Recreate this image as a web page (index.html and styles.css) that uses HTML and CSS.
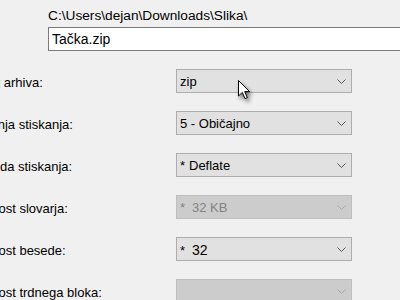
FILE: index.html
```html
<!DOCTYPE html>
<html lang="sl">
<head>
  <meta charset="UTF-8">
  <title>Dodaj v arhiv</title>
  <link rel="stylesheet" href="styles.css">
</head>
<body>
  <div class="dialog">
    <div class="archive">
      <div class="path">C:\Users\dejan\Downloads\Slika\</div>
      <div class="name-box">Tačka.zip</div>
    </div>

    <div class="options">
      <div class="label">Format arhiva:</div>
      <div class="combo">
        <span class="value">zip</span>
        <svg class="arrow" width="9" height="5" viewBox="0 0 9 5"><path d="M0.5 0.5 L4.5 4.5 L8.5 0.5" fill="none" stroke="currentColor"/></svg>
      </div>

      <div class="label">Stopnja stiskanja:</div>
      <div class="combo">
        <span class="value">5 - Običajno</span>
        <svg class="arrow" width="9" height="5" viewBox="0 0 9 5"><path d="M0.5 0.5 L4.5 4.5 L8.5 0.5" fill="none" stroke="currentColor"/></svg>
      </div>

      <div class="label">Metoda stiskanja:</div>
      <div class="combo">
        <span class="value"><span class="star">*</span>Deflate</span>
        <svg class="arrow" width="9" height="5" viewBox="0 0 9 5"><path d="M0.5 0.5 L4.5 4.5 L8.5 0.5" fill="none" stroke="currentColor"/></svg>
      </div>

      <div class="label">Velikost slovarja:</div>
      <div class="combo disabled">
        <span class="value"><span class="star wide">*</span>32 KB</span>
        <svg class="arrow" width="9" height="5" viewBox="0 0 9 5"><path d="M0.5 0.5 L4.5 4.5 L8.5 0.5" fill="none" stroke="currentColor"/></svg>
      </div>

      <div class="label">Velikost besede:</div>
      <div class="combo">
        <span class="value"><span class="star wide">*</span><span class="num">32</span></span>
        <svg class="arrow" width="9" height="5" viewBox="0 0 9 5"><path d="M0.5 0.5 L4.5 4.5 L8.5 0.5" fill="none" stroke="currentColor"/></svg>
      </div>

      <div class="label">Velikost trdnega bloka:</div>
      <div class="combo disabled">
        <span class="value"></span>
        <svg class="arrow" width="9" height="5" viewBox="0 0 9 5"><path d="M0.5 0.5 L4.5 4.5 L8.5 0.5" fill="none" stroke="currentColor"/></svg>
      </div>
    </div>
  </div>

  <!-- kazalec miške -->
  <svg class="cursor" width="13" height="20" viewBox="0 0 13 20">
    <path d="M0.5 0.5 L0.5 16 L4.3 12.4 L7 18.6 L9.3 17.6 L6.7 11.6 L11.6 11.6 Z" fill="#fff" stroke="#000" stroke-width="1"/>
  </svg>
</body>
</html>
```

FILE: styles.css
```css
  body {
    margin: 0;
    background: #f0f0f0;
    font-family: 'Liberation Sans', Arial, sans-serif;
    font-size: 13px;
    color: #000;
    overflow: hidden;
    height: 300px;
    position: relative;
  }

  /* okno je odrezano na levi strani */
  .dialog {
    margin-left: -29px;
    padding-top: 8px;
  }

  .archive {
    margin-left: 77px;
  }

  .path {
    font-size: 13.7px;
    line-height: 15px;
    height: 19px;
    white-space: nowrap;
  }

  .name-box {
    height: 22px;
    width: 400px;
    border: 1px solid #7a7a7a;
    background: #fff;
    font-size: 14px;
    line-height: 22px;
    padding-left: 3px;
  }

  .options {
    display: grid;
    grid-template-columns: 205px 176px;
    row-gap: 18px;
    margin-top: 18px;
  }

  .label {
    display: flex;
    align-items: center;
    height: 24px;
    padding-top: 2px;
    box-sizing: border-box;
    white-space: nowrap;
  }

  /* "Format " sega čez levi rob */
  .options .label:first-child {
    margin-left: -12px;
  }

  .combo {
    display: flex;
    align-items: center;
    justify-content: space-between;
    height: 24px;
    box-sizing: border-box;
    border: 1px solid #adadad;
    background: #e1e1e1;
    padding: 1px 5px 0 3px;
    color: #000;
  }

  .combo .arrow {
    color: #555;
    margin-top: -1px;
  }

  .combo.disabled {
    border-color: #bfbfbf;
    background: #cccccc;
    color: #838383;
  }

  .combo.disabled .arrow {
    color: #a8a8a8;
  }

  .star {
    display: inline-block;
    width: 9px;
  }

  .star.wide {
    width: 12px;
  }

  .num {
    font-size: 14px;
  }

  .cursor {
    position: absolute;
    left: 238px;
    top: 80px;
    filter: drop-shadow(2px 3px 2px rgba(0, 0, 0, 0.55));
  }
```
